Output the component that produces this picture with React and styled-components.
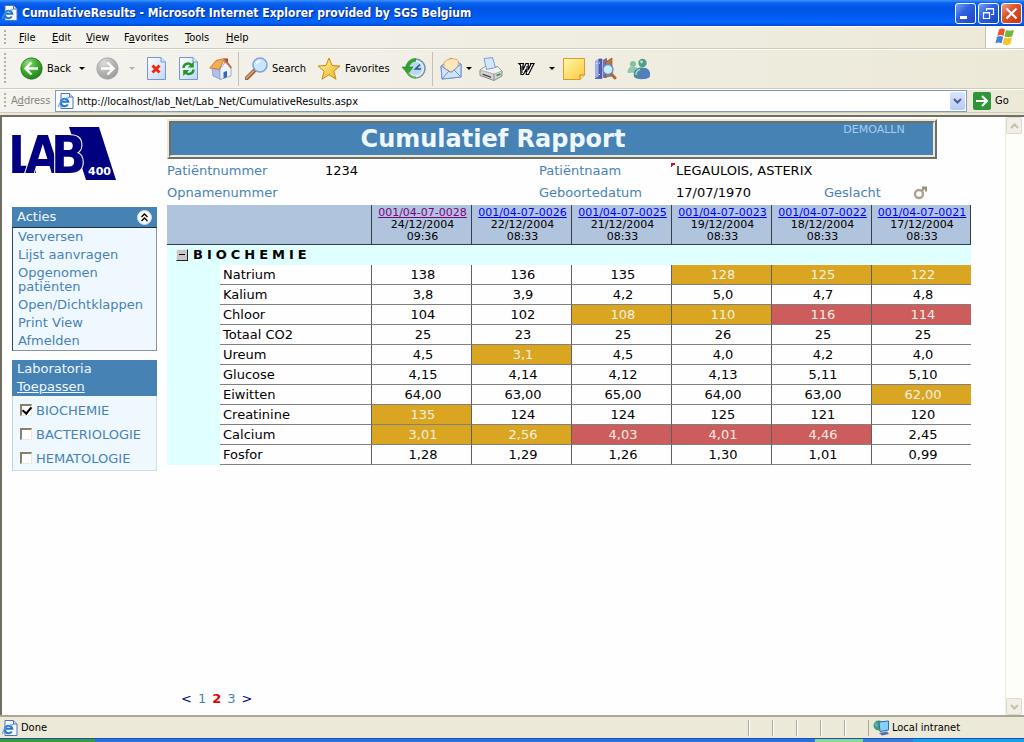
import React from 'react';
import styled, { createGlobalStyle } from 'styled-components';

const ui = '"DejaVu Sans Condensed", "DejaVu Sans", sans-serif';
const web = '"DejaVu Sans", sans-serif';
const steel = '#4682b4';
const face = '#ece9d8';

const GlobalStyle = createGlobalStyle`
  * { box-sizing: border-box; }
  body { margin: 0; font-family: ${web}; font-size: 13px; color: #000; background: ${face}; }
  button { font: inherit; color: inherit; background: none; border: 0; padding: 0; }
  svg { display: block; flex: none; }
  h1, ul { margin: 0; padding: 0; }
  ul { list-style: none; }
`;

const Window = styled.div`
  display: flex;
  flex-direction: column;
  min-height: 100vh;
`;

/* ---------- title bar ---------- */
const TitleBar = styled.header`
  display: flex;
  align-items: center;
  gap: 4px;
  height: 26px;
  padding: 0 2px;
  background: linear-gradient(#3d95ff 0, #0b62ef 3px, #0054e3 8px, #0058ee 14px, #0266ff 22px, #0048d0 26px);
`;
const WindowTitle = styled.span`
  flex: 1;
  font: bold 12px/24px ${ui};
  color: #fff;
  text-shadow: 1px 1px #0a2a80;
  white-space: nowrap;
`;
const CaptionButtons = styled.div`
  display: flex;
  gap: 2px;
`;
const CaptionButton = styled.button`
  display: flex;
  align-items: center;
  justify-content: center;
  width: 21px;
  height: 21px;
  border: 1px solid #fff;
  border-radius: 3px;
  background: ${(p) =>
    p.$close
      ? 'linear-gradient(135deg, #f0a086, #e0532d 40%, #c8350f)'
      : 'linear-gradient(135deg, #7ba2f5, #2f62e0 40%, #1b44c8)'};
`;

/* ---------- menu, tool and address bars ---------- */
const Bar = styled.div`
  display: flex;
  align-items: center;
  height: ${(p) => p.$height}px;
  font: 11px ${ui};
  background: linear-gradient(90deg, #f4f3ee, ${face});
  border-bottom: 1px solid #d0cdbb;
  box-shadow: inset 0 1px #fff;
`;
const Grip = styled.span`
  flex: none;
  width: 2px;
  margin-left: 4px;
  align-self: stretch;
  margin-block: 4px;
  background: repeating-linear-gradient(#b5b2a3 0 2px, transparent 2px 4px);
`;
const Menu = styled.nav`
  display: flex;
  flex: 1;
  padding-left: 6px;
`;
const MenuItem = styled.button`
  width: ${(p) => p.$width}px;
  padding: 0 7px;
  text-align: left;
  white-space: nowrap;
`;
const Flag = styled.div`
  display: flex;
  align-items: center;
  justify-content: center;
  align-self: stretch;
  width: 39px;
  background: #fff;
  border-left: 1px solid #c5c2b2;
`;
const Tools = styled.div`
  display: flex;
  align-items: center;
  align-self: stretch;
  padding-left: 8px;
`;
const Tool = styled.button`
  display: flex;
  align-items: center;
  justify-content: ${(p) => (p.$label ? 'flex-start' : 'center')};
  gap: 4px;
  width: ${(p) => p.$width}px;
  height: 100%;
  padding-left: ${(p) => (p.$label ? 6 : 0)}px;
  white-space: nowrap;
`;
const Divider = styled.span`
  width: 1px;
  height: 34px;
  background: #c5c2b2;
`;
const AddressLabel = styled.label`
  flex: none;
  width: 49px;
  padding-left: 5px;
  color: #888576;
`;
const AddressBox = styled.div`
  display: flex;
  flex: 1;
  align-items: center;
  min-width: 0;
  height: 22px;
  padding: 0 1px 0 2px;
  background: #fff;
  border: 1px solid #7f9db9;
`;
const AddressInput = styled.input`
  flex: 1;
  min-width: 0;
  padding: 2px 3px 0;
  border: 0;
  outline: 0;
  font: 11px ${ui};
  background: transparent;
`;
const DropButton = styled.button`
  display: flex;
  align-items: center;
  justify-content: center;
  width: 15px;
  height: 18px;
  border-radius: 2px;
  background: linear-gradient(#d9e4fd, #b7cbf8);
`;
const GoButton = styled.button`
  display: flex;
  align-items: center;
  flex: none;
  gap: 4px;
  width: 57px;
  padding-left: 6px;
`;

/* ---------- page ---------- */
const Viewport = styled.div`
  display: flex;
  flex: 1;
  margin-top: 2px;
  background: #fefefe;
  border: solid #716f64;
  border-width: 2px 0 0 2px;
`;
const Sidebar = styled.aside`
  flex: none;
  width: 145px;
  margin: 10px 10px 0 10px;
`;
const Panel = styled.section`
  margin-top: ${(p) => p.$top}px;
  padding-bottom: ${(p) => (p.$soft ? 2 : 0)}px;
  background: #f0f8ff;
  border: 1px solid ${(p) => (p.$soft ? '#d5dce0' : '#8a949c')};
  border-left-color: ${(p) => (p.$soft ? '#c5d0d8' : '#27496a')};
`;
const PanelHead = styled.div`
  display: flex;
  flex-wrap: wrap;
  align-items: center;
  justify-content: space-between;
  margin: -1px -1px 0;
  padding: ${(p) => (p.$tall ? '0 5px' : '1px 5px')};
  line-height: 18px;
  color: #f0f8ff;
  background: ${steel};
  border-bottom: ${(p) => (p.$tall ? 0 : '1px solid #1c2f45')};
`;
const HeadText = styled.span`
  flex: ${(p) => (p.$full ? '0 0 100%' : 'none')};
`;
const HeadLink = styled.a`
  color: #f0f8ff;
`;
const ActionList = styled.ul`
  padding: 0 4px 0 5px;
`;
const ActionItem = styled.li`
  padding: 2px 0;
  line-height: 14px;
`;
const ActionLink = styled.a`
  color: ${steel};
  text-decoration: none;
`;
const CheckRow = styled.label`
  display: flex;
  align-items: center;
  gap: 4px;
  height: 24px;
  padding: 5px 0 0 7px;
  color: ${steel};
`;
const CheckBox = styled.input`
  appearance: none;
  display: flex;
  align-items: center;
  justify-content: center;
  flex: none;
  width: 12px;
  height: 12px;
  margin: 0 0 2px;
  background: #fff;
  border: solid;
  border-width: 2px 1px 1px 2px;
  border-color: #85816c #ece9d8 #ece9d8 #85816c;
  &:checked::after {
    content: '';
    width: 4px;
    height: 7px;
    margin-bottom: 2px;
    border: solid #000;
    border-width: 0 2px 2px 0;
    transform: rotate(40deg);
  }
`;
const Main = styled.main`
  display: flex;
  flex: 1;
  flex-direction: column;
  min-width: 0;
  padding: 2px 34px 6px 0;
`;
const Banner = styled.div`
  margin-right: 34px;
  background: ${steel};
  border: 2px solid;
  border-color: ${face} #716f64 #716f64 ${face};
`;
const BannerInner = styled.div`
  display: grid;
  grid-template-columns: 1fr 118px;
  border: 2px solid;
  border-color: #716f64 ${face} ${face} #716f64;
`;
const ReportTitle = styled.h1`
  font-size: 24px;
  line-height: 32px;
  text-align: center;
  color: #f0f8ff;
`;
const UserName = styled.span`
  font-size: 11px;
  line-height: 14px;
  text-align: center;
  color: #a8cdee;
`;
const PatientInfo = styled.dl`
  display: grid;
  grid-template-columns: 158px 214px 137px 148px 89px 1fr;
  grid-auto-rows: 22px;
  align-items: center;
  margin: 0 0 2px;
`;
const Term = styled.dt`
  color: ${steel};
`;
const Value = styled.dd`
  position: relative;
  margin: 0;
  white-space: nowrap;
`;
const NoteMark = styled.i`
  position: absolute;
  top: 0;
  left: -5px;
  width: 5px;
  height: 5px;
  background: linear-gradient(135deg, #d01020 50%, transparent 50%);
`;
const Results = styled.table`
  width: 100%;
  table-layout: fixed;
  border-spacing: 0;
`;
const Col = styled.col`
  width: ${(p) => (p.$width ? `${p.$width}px` : 'auto')};
`;
const HeadCell = styled.th`
  height: 40px;
  padding: 1px 0 0 2px;
  font-weight: normal;
  font-size: 11px;
  line-height: 12px;
  background: #b0c4de;
  border-bottom: 1px solid #333f4a;
  border-left: ${(p) => (p.$blank ? 0 : '1px solid #333f4a')};
  &:last-child { border-right: 1px solid #333f4a; }
`;
const OrderLink = styled.a`
  display: block;
  color: ${(p) => (p.$visited ? '#800080' : '#0000ff')};
`;
const GroupCell = styled.th`
  height: 20px;
  padding: 0 9px;
  text-align: left;
  background: #e0ffff;
`;
const GroupLine = styled.div`
  display: flex;
  align-items: center;
  gap: 5px;
  line-height: 20px;
  letter-spacing: 4px;
`;
const Collapse = styled.button`
  width: 12px;
  height: 12px;
  display: flex;
  align-items: center;
  justify-content: center;
  background: #c8c8c8;
  border: solid;
  border-width: 1px;
  border-color: #eee #222 #222 #eee;
`;
const Indent = styled.td`
  padding: 0;
  background: #e0ffff;
`;
const NameCell = styled.th`
  height: 20px;
  padding: 0 3px;
  font-weight: normal;
  text-align: left;
  line-height: 19px;
  border-bottom: 1px solid #808080;
`;
const tones = { high: '#daa520', alarm: '#cd5c5c' };
const ResultCell = styled.td`
  height: 20px;
  padding: 0 0 0 3px;
  text-align: center;
  line-height: 19px;
  color: ${(p) => (p.$tone ? '#f4f0e4' : '#000')};
  background: ${(p) => tones[p.$tone] || 'transparent'};
  border-left: 1px solid #606060;
  border-bottom: 1px solid #808080;
`;
const Pager = styled.nav`
  display: flex;
  gap: 6px;
  margin-top: auto;
  padding-left: 14px;
  line-height: 20px;
`;
const PageLink = styled.a`
  color: ${(p) => (p.$arrow ? '#000080' : p.$current ? '#e00000' : steel)};
  font-weight: ${(p) => (p.$current ? 'bold' : 'normal')};
  text-decoration: none;
`;
const ScrollTrack = styled.div`
  display: flex;
  flex: none;
  flex-direction: column;
  justify-content: space-between;
  width: 17px;
  margin-right: 2px;
  background: #fdfdfa;
  border-left: 1px solid #efede3;
`;
const ScrollButton = styled.button`
  display: flex;
  align-items: center;
  justify-content: center;
  height: 17px;
  background: #f1efe6;
  border: 1px solid #dedbcb;
  border-radius: 2px;
`;

/* ---------- status bar ---------- */
const StatusBar = styled.footer`
  display: flex;
  align-items: center;
  height: 23px;
  padding-left: 2px;
  font: 11px ${ui};
  background: ${face};
  border-top: 2px solid #a9a695;
`;
const StatusText = styled.span`
  flex: 1;
  padding-left: 3px;
`;
const StatusSlot = styled.span`
  width: 24px;
  height: 16px;
  border-left: 1px solid #aca899;
  box-shadow: inset 1px 0 #fff;
`;
const ZoneSlot = styled.span`
  display: flex;
  align-items: center;
  gap: 2px;
  width: 156px;
  height: 16px;
  padding-left: 4px;
  border-left: 1px solid #aca899;
`;
const TaskStrip = styled.div`
  display: flex;
  height: 4px;
  background: #2e6fe0;
  border-top: 1px solid #1c4fb4;
`;
const Task = styled.span`
  flex: ${(p) => p.$span};
  background: ${(p) => p.$color};
`;

/* ---------- icons ---------- */
const Ie = ({ size = 16 }) => (
  <svg width={size} height={size} viewBox="0 0 16 16">
    <path d="M3 .5h8.500l3.500 3.500v11.500H3z" fill="#f4f8ff" stroke="#5673b0" />
    <path d="M11.500.5v3.500H15" fill="#cddcf5" stroke="#5673b0" />
    <path d="M9.800 11.500A3.800 3.800 0 1 1 10.300 8.700H3.500" fill="none" stroke="#2474d0" strokeWidth="2" />
    <path d="M1 14C-.5 11 6 4.500 11.500 4.500" fill="none" stroke="#49a4ea" strokeWidth="1.200" />
  </svg>
);
const Arrow = ({ color = '#000' }) => (
  <svg width="6" height="3" viewBox="0 0 6 3"><path d="M0 0h6L3 3z" fill={color} /></svg>
);
const Round = ({ grey }) => (
  <svg width="23" height="23" viewBox="0 0 23 23">
    <defs>
      <radialGradient id={grey ? 'rg' : 'rn'} cx=".35" cy=".25" r=".85">
        <stop offset="0" stopColor={grey ? '#dcdcdc' : '#8fdc7c'} />
        <stop offset=".5" stopColor={grey ? '#b5b5b5' : '#3caa2e'} />
        <stop offset="1" stopColor={grey ? '#999' : '#1c7d16'} />
      </radialGradient>
    </defs>
    <circle cx="11.500" cy="11.500" r="10.700" fill={`url(#${grey ? 'rg' : 'rn'})`} stroke={grey ? '#a6a6a6' : '#237a1c'} strokeWidth=".8" />
    <path d={grey ? 'M5 11.500h12M11.500 5.500l6 6-6 6' : 'M18 11.500H6M11.500 5.500l-6 6 6 6'} fill="none" stroke="#fff" strokeWidth="2.400" />
  </svg>
);
const Sheet = ({ children }) => (
  <svg width="19" height="23" viewBox="0 0 19 23">
    <defs><linearGradient id="sheet" x2="1" y2="1"><stop stopColor="#fff" /><stop offset="1" stopColor="#bfd5fa" /></linearGradient></defs>
    <path d="M.5.500h13.500l4.500 4.500v17.500H.5z" fill="url(#sheet)" stroke="#7897cf" />
    <path d="M14 .5V5h4.500" fill="#dde9fd" stroke="#7897cf" />
    {children}
  </svg>
);
const Stop = () => (
  <Sheet><path d="M5.500 8.500l7 7M12.500 8.500l-7 7" stroke="#ea2c10" strokeWidth="3" /></Sheet>
);
const Refresh = () => (
  <Sheet>
    <path d="M4.500 11c0-4 5-6 8-3" fill="none" stroke="#1e9a24" strokeWidth="2.400" />
    <path d="M14.800 4.500v6h-6z" fill="#1e9a24" />
    <path d="M14.500 12.500c0 4-5 6-8 3" fill="none" stroke="#1e9a24" strokeWidth="2.400" />
    <path d="M4.200 19v-6h6z" fill="#1e9a24" />
  </Sheet>
);
const Home = () => (
  <svg width="23" height="23" viewBox="0 0 23 23">
    <path d="M15.500 1.500h3.500v6h-3.500z" fill="#b23a22" />
    <path d="M3 11l1 8 8 3.500V13L7 6z" fill="#a9c3ec" stroke="#7694c6" strokeWidth=".7" />
    <path d="M11 22.500V12l5.500-7 5.500 6.500v7.500z" fill="#eef4fe" stroke="#7694c6" strokeWidth=".7" />
    <path d="M14.500 21.500v-6.500l3.500-1v6z" fill="#3c67b5" />
    <path d="M.8 11L7 3.500 15.500 1.500 10.500 12.500z" fill="#f5ad55" stroke="#c26b22" strokeWidth=".8" />
    <path d="M15.500 2l6.800 9" stroke="#c26b22" strokeWidth="1.600" />
  </svg>
);
const Search = () => (
  <svg width="23" height="23" viewBox="0 0 23 23">
    <path d="M1.500 21.500l8-8" stroke="#9a6540" strokeWidth="4" strokeLinecap="round" />
    <path d="M1.500 21l7-7" stroke="#dfa97a" strokeWidth="1.500" strokeLinecap="round" />
    <circle cx="15" cy="8" r="7" fill="#c8e6fb" stroke="#7fa3dc" strokeWidth="1.600" />
    <path d="M10.500 8a4.500 4.500 0 0 1 6-4.200c-2 .5-4.500 2.500-6 4.200z" fill="#fff" />
  </svg>
);
const Star = () => (
  <svg width="24" height="23" viewBox="0 0 24 23">
    <defs><linearGradient id="gold" x2="1" y2="1"><stop stopColor="#fff7a0" /><stop offset="1" stopColor="#f3b01c" /></linearGradient></defs>
    <path d="M12 1l3 7.500 8 .5-6.200 5.200 2.200 8-7-4.500-7 4.500 2.200-8L1 9l8-.5z" fill="url(#gold)" stroke="#c8891a" />
  </svg>
);
const History = () => (
  <svg width="24" height="23" viewBox="0 0 24 23">
    <circle cx="13.500" cy="11.500" r="9.500" fill="#e2edf4" stroke="#7e949f" strokeWidth="1.600" />
    <circle cx="13.500" cy="11.500" r="6.800" fill="#b8d8f2" />
    <path d="M18 7.500l-4.500 4.500h5.500" fill="none" stroke="#2c5488" strokeWidth="1.600" />
    <path d="M14 2.800A8.500 8.500 0 0 0 5.500 11" fill="none" stroke="#35a42e" strokeWidth="3.600" />
    <path d="M0 10h11l-5 7z" fill="#35a42e" stroke="#1e7d1b" strokeWidth=".6" />
    <path d="M6 15c1 3.500 4 5.500 8 5.500" fill="none" stroke="#58b84a" strokeWidth="2" />
  </svg>
);
const Mail = () => (
  <svg width="22" height="23" viewBox="0 0 22 23">
    <path d="M1 9l10-8 10 6v13L2 22z" fill="#b7d2f6" stroke="#7290cc" />
    <path d="M4 5.500C7 1 16 .5 18.500 4l-.5 7-7 4-7-4z" fill="#fde6bc" stroke="#e2a765" />
    <path d="M1 9l10 6.500L21 7v13L2 22z" fill="#cfe4fc" stroke="#7290cc" />
    <path d="M2 22l7-8M21 20l-7-7" stroke="#7290cc" />
  </svg>
);
const Printer = () => (
  <svg width="24" height="24" viewBox="0 0 24 24">
    <path d="M1 13l6-4 12 1 4 4v5l-8 4.500-14-5z" fill="#d4d4d4" stroke="#8b8b8b" />
    <path d="M1 13l14 4 8-3-4-4-12-1z" fill="#f1f1f1" stroke="#9a9a9a" strokeWidth=".7" />
    <path d="M5 1.500L13.500.5l3 10-9 2z" fill="#d3e6fd" stroke="#7d9dd0" />
    <path d="M15 17v6" stroke="#8b8b8b" /><path d="M3.500 16.500l8.500 3v1.500l-8.500-3z" fill="#4c4c4c" />
    <path d="M17.500 18.500l4-1.500" stroke="#37902d" strokeWidth="1.500" />
  </svg>
);
const Word = () => (
  <svg width="18" height="14" viewBox="0 0 18 14">
    <path d="M2 1.500h4.500l-.5 1.500v5l3-6.500h2.200v6.500L14 2l-1-.5h4l-5.500 11h-2.200V7l-3 5.500H4L3.500 3z" fill="#fff" stroke="#000" strokeWidth="1.200" />
    <path d="M5 4v7M10 4v6" stroke="#000" />
  </svg>
);
const Note = () => (
  <svg width="22" height="22" viewBox="0 0 22 22">
    <defs><linearGradient id="note" x2="1" y2="1"><stop stopColor="#fff7a8" /><stop offset="1" stopColor="#fbc93d" /></linearGradient></defs>
    <path d="M.5.500h21v16.500l-4.500 4.500H.5z" fill="url(#note)" stroke="#d79b28" />
    <path d="M17 21.500v-4.500h4.500" fill="#ffe58a" stroke="#bd861e" />
  </svg>
);
const Research = () => (
  <svg width="23" height="23" viewBox="0 0 23 23">
    <path d="M1 4l4-2.500v18L1 21z" fill="#9fb0e8" /><path d="M5 2h3v19.500H1l4-2z" fill="#5360b4" stroke="#3c4795" strokeWidth=".6" />
    <path d="M9.500 3l3-1.500v19h-3z" fill="#7c6fc0" stroke="#4b4394" strokeWidth=".6" />
    <path d="M11.500 5L18 1v18l-6.500 1z" fill="#b4793c" stroke="#80501f" strokeWidth=".6" />
    <path d="M16 15.500l5 5.500" stroke="#a96c34" strokeWidth="3" strokeLinecap="round" />
    <circle cx="14" cy="12.500" r="5" fill="#c9ebfb" stroke="#6788c6" strokeWidth="1.300" />
    <path d="M5.500 5.500v1M5.500 17v1M2.800 6v1" stroke="#fff" />
  </svg>
);
const People = () => (
  <svg width="24" height="22" viewBox="0 0 24 22">
    <circle cx="6" cy="6" r="3" fill="#7fc3a4" /><path d="M.5 15c0-5 2-6.500 5.500-6.500s5 2 5 6z" fill="#8ccbb0" />
    <circle cx="15.500" cy="5" r="4.200" fill="#4f9f88" /><circle cx="14.500" cy="3.800" r="1.600" fill="#a8d9c8" />
    <path d="M7 19c-1-7 2-9.500 8-9.500s9 3 7.500 9.500c-4 3-12 3-15.500 0z" fill="#4b8aa6" />
    <path d="M13 20.500c-1-5 2-8 8-8.500 2 2 2.500 4.500 1.500 7-2.500 2-6 2-9.500 1.500z" fill="#547cc4" />
    <path d="M9 17c0-3 1-5 4-5.500" stroke="#a8d9c8" strokeWidth="1.500" fill="none" />
  </svg>
);
const WinFlag = () => (
  <svg width="20" height="19" viewBox="0 0 20 19">
    <path d="M4 1.500c2-1.200 4-1.200 6 0L8.500 8c-2-1.200-4-1.200-6.200 0z" fill="#e8542c" />
    <path d="M11 2c2 1 5 1 8-.3l-1.700 6.500c-2.500 1.300-5 1.300-7.800.3z" fill="#6fb83c" />
    <path d="M2 9c2-1.200 4.200-1.200 6.200 0l-1.600 6.300c-2-1.200-4-1.200-6.200 0z" fill="#3d82d8" />
    <path d="M9.200 9.500c2.500 1 5.200 1 7.800-.3L15.400 16c-2.600 1.300-5.200 1.300-7.800 0z" fill="#f6c22c" />
  </svg>
);
const GoIcon = () => (
  <svg width="18" height="18" viewBox="0 0 18 18">
    <rect width="18" height="18" rx="2" fill="#2f9637" />
    <path d="M3 9h11M9 4l5 5-5 5" fill="none" stroke="#fff" strokeWidth="2" />
  </svg>
);
const Chevron = ({ up, color = '#4d6185' }) => (
  <svg width="9" height="6" viewBox="0 0 9 6">
    <path d={up ? 'M1 5l3.500-3.500L8 5' : 'M1 1l3.500 3.500L8 1'} fill="none" stroke={color} strokeWidth="2" />
  </svg>
);
const FoldIcon = () => (
  <svg width="15" height="15" viewBox="0 0 15 15">
    <circle cx="7.500" cy="7.500" r="7" fill="#fff" stroke="#c9dcec" />
    <path d="M4.500 7l3-3 3 3M4.500 11l3-3 3 3" fill="none" stroke="#000" strokeWidth="1.400" />
  </svg>
);
const Male = () => (
  <svg width="15" height="15" viewBox="0 0 15 15">
    <circle cx="6" cy="9" r="4" fill="none" stroke="#ada18c" strokeWidth="2.400" />
    <path d="M9 5.500L11.500 3M9 2.500h4v4" fill="none" stroke="#9c8f78" strokeWidth="2" />
  </svg>
);
const Zone = () => (
  <svg width="17" height="16" viewBox="0 0 17 16">
    <circle cx="5.500" cy="5.500" r="5" fill="#3ba35a" /><path d="M2 2.500c3 0 4 2 2 5-2-1-3.500-3-2-5z" fill="#57a6e8" />
    <path d="M6 2l9.500-1v9L7 11.500z" fill="#86d0f8" stroke="#3a66b4" />
    <path d="M6 13l8-1.500 2 2.500-7 1.500z" fill="#5570ac" />
  </svg>
);
const LogoSvg = styled.svg`
  overflow: visible;
  fill: #000080;
`;
const LogoName = styled.text`
  font: bold 51px ${ui};
  stroke: #fff;
  stroke-width: 2px;
  paint-order: stroke;
`;
const LogoNumber = styled.text`
  font: bold 11px ${web};
  fill: #fff;
`;
const Logo = () => (
  <LogoSvg width="104" height="53" viewBox="0 0 104 53" role="img" aria-label="LAB 400">
    <path d="M57 0h30l17 53H74z" />
    <LogoName y="46">
      <tspan x="-4">L</tspan>
      <tspan x="13">A</tspan>
      <tspan x="39">B</tspan>
    </LogoName>
    <LogoNumber x="76" y="48">400</LogoNumber>
  </LogoSvg>
);

/* ---------- data ---------- */
const menus = [['F', 'ile', 33], ['E', 'dit', 34], ['V', 'iew', 38], ['F', 'avorites', 61, 1], ['T', 'ools', 41], ['H', 'elp', 40]];
const actions = ['Verversen', 'Lijst aanvragen', 'Opgenomen patiënten', 'Open/Dichtklappen', 'Print View', 'Afmelden'];
const labs = [['BIOCHEMIE', true], ['BACTERIOLOGIE', false], ['HEMATOLOGIE', false]];
const orders = [
  ['001/04-07-0028', '24/12/2004', '09:36'],
  ['001/04-07-0026', '22/12/2004', '08:33'],
  ['001/04-07-0025', '21/12/2004', '08:33'],
  ['001/04-07-0023', '19/12/2004', '08:33'],
  ['001/04-07-0022', '18/12/2004', '08:33'],
  ['001/04-07-0021', '17/12/2004', '08:33'],
];
// One letter per result: "." normal, "h" outside the range, "a" alarm.
const results = [
  ['Natrium', '...hhh', ['138', '136', '135', '128', '125', '122']],
  ['Kalium', '......', ['3,8', '3,9', '4,2', '5,0', '4,7', '4,8']],
  ['Chloor', '..hhaa', ['104', '102', '108', '110', '116', '114']],
  ['Totaal CO2', '......', ['25', '23', '25', '26', '25', '25']],
  ['Ureum', '.h....', ['4,5', '3,1', '4,5', '4,0', '4,2', '4,0']],
  ['Glucose', '......', ['4,15', '4,14', '4,12', '4,13', '5,11', '5,10']],
  ['Eiwitten', '.....h', ['64,00', '63,00', '65,00', '64,00', '63,00', '62,00']],
  ['Creatinine', 'h.....', ['135', '124', '124', '125', '121', '120']],
  ['Calcium', 'hhaaa.', ['3,01', '2,56', '4,03', '4,01', '4,46', '2,45']],
  ['Fosfor', '......', ['1,28', '1,29', '1,26', '1,30', '1,01', '0,99']],
];
const toneOf = { h: 'high', a: 'alarm' };

export default function App() {
  return (
    <Window>
      <GlobalStyle />
      <TitleBar>
        <Ie />
        <WindowTitle>CumulativeResults - Microsoft Internet Explorer provided by SGS Belgium</WindowTitle>
        <CaptionButtons>
          <CaptionButton aria-label="Minimize">
            <svg width="13" height="13"><path d="M1 9h7v3H1z" fill="#fff" /></svg>
          </CaptionButton>
          <CaptionButton aria-label="Restore">
            <svg width="13" height="13"><path d="M4.500 4V1.500h7v6H9M1.500 5.500h6v6h-6zM4 2h8M1 6h7" fill="none" stroke="#fff" strokeWidth="1.200" /></svg>
          </CaptionButton>
          <CaptionButton $close aria-label="Close">
            <svg width="13" height="13"><path d="M1.500 1.500l10 10M11.500 1.500l-10 10" stroke="#fff" strokeWidth="2.200" /></svg>
          </CaptionButton>
        </CaptionButtons>
      </TitleBar>

      <Bar $height={23}>
        <Grip />
        <Menu>
          {menus.map(([first, rest, width, second]) => (
            <MenuItem key={first + rest} $width={width}>
              {second ? <>{first}<u>{rest[0]}</u>{rest.slice(1)}</> : <><u>{first}</u>{rest}</>}
            </MenuItem>
          ))}
        </Menu>
        <Flag><WinFlag /></Flag>
      </Bar>

      <Bar $height={40}>
        <Grip />
        <Tools>
          <Tool $width={62} $label><Round />Back</Tool>
          <Tool $width={12} aria-label="Back history"><Arrow /></Tool>
          <Tool $width={38} aria-label="Forward"><Round grey /></Tool>
          <Tool $width={12} aria-label="Forward history"><Arrow color="#b5b2a3" /></Tool>
          <Tool $width={36} aria-label="Stop"><Stop /></Tool>
          <Tool $width={28} aria-label="Refresh"><Refresh /></Tool>
          <Tool $width={36} aria-label="Home"><Home /></Tool>
          <Divider />
          <Tool $width={72} $label><Search />Search</Tool>
          <Tool $width={84} $label><Star />Favorites</Tool>
          <Tool $width={37} aria-label="History"><History /></Tool>
          <Divider />
          <Tool $width={46} aria-label="Mail"><Mail /><Arrow /></Tool>
          <Tool $width={24} aria-label="Print"><Printer /></Tool>
          <Tool $width={46} aria-label="Edit with Word"><Word /></Tool>
          <Tool $width={6} aria-label="Choose editor"><Arrow /></Tool>
          <Tool $width={38} aria-label="Discuss"><Note /></Tool>
          <Tool $width={24} aria-label="Research"><Research /></Tool>
          <Tool $width={44} aria-label="Messenger"><People /></Tool>
        </Tools>
      </Bar>

      <Bar $height={24}>
        <Grip />
        <AddressLabel htmlFor="address">A<u>d</u>dress</AddressLabel>
        <AddressBox>
          <Ie />
          <AddressInput id="address" defaultValue="http://localhost/lab_Net/Lab_Net/CumulativeResults.aspx" />
          <DropButton aria-label="Show addresses"><Chevron /></DropButton>
        </AddressBox>
        <GoButton><GoIcon />Go</GoButton>
      </Bar>

      <Viewport>
        <Sidebar>
          <Logo />
          <Panel $top={27}>
            <PanelHead>
              <HeadText>Acties</HeadText>
              <button aria-label="Fold"><FoldIcon /></button>
            </PanelHead>
            <ActionList>
              {actions.map((a) => <ActionItem key={a}><ActionLink href="#">{a}</ActionLink></ActionItem>)}
            </ActionList>
          </Panel>
          <Panel $top={9} $soft>
            <PanelHead $tall>
              <HeadText $full>Laboratoria</HeadText>
              <HeadLink href="#">Toepassen</HeadLink>
            </PanelHead>
            {labs.map(([name, on]) => (
              <CheckRow key={name}><CheckBox type="checkbox" defaultChecked={on} />{name}</CheckRow>
            ))}
          </Panel>
        </Sidebar>

        <Main>
          <Banner>
            <BannerInner>
              <ReportTitle>Cumulatief Rapport</ReportTitle>
              <UserName>DEMOALLN</UserName>
            </BannerInner>
          </Banner>
          <PatientInfo>
            <Term>Patiëntnummer</Term><Value>1234</Value>
            <Term>Patiëntnaam</Term><Value><NoteMark />LEGAULOIS, ASTERIX</Value>
            <Term /><Value />
            <Term>Opnamenummer</Term><Value />
            <Term>Geboortedatum</Term><Value>17/07/1970</Value>
            <Term>Geslacht</Term><Value><Male /></Value>
          </PatientInfo>
          <Results>
            <colgroup>
              <Col $width={53} /><Col $width={151} />
              {orders.map(([id]) => <Col key={id} />)}
            </colgroup>
            <thead>
              <tr>
                <HeadCell colSpan={2} $blank />
                {orders.map(([id, date, time], i) => (
                  <HeadCell key={id}>
                    <OrderLink href="#" $visited={i === 0}>{id}</OrderLink>
                    {date}<br />{time}
                  </HeadCell>
                ))}
              </tr>
            </thead>
            <tbody>
              <tr>
                <GroupCell colSpan={8}>
                  <GroupLine>
                    <Collapse aria-label="Collapse"><svg width="6" height="2"><path d="M0 0h6v1H0z" /></svg></Collapse>
                    BIOCHEMIE
                  </GroupLine>
                </GroupCell>
              </tr>
              {results.map(([name, marks, values]) => (
                <tr key={name}>
                  <Indent />
                  <NameCell scope="row">{name}</NameCell>
                  {values.map((v, i) => <ResultCell key={orders[i][0]} $tone={toneOf[marks[i]]}>{v}</ResultCell>)}
                </tr>
              ))}
            </tbody>
          </Results>
          <Pager>
            <PageLink href="#" $arrow>&lt;</PageLink>
            <PageLink href="#">1</PageLink>
            <PageLink href="#" $current>2</PageLink>
            <PageLink href="#">3</PageLink>
            <PageLink href="#" $arrow>&gt;</PageLink>
          </Pager>
        </Main>
        <ScrollTrack>
          <ScrollButton aria-label="Scroll up"><Chevron up color="#c3c0b0" /></ScrollButton>
          <ScrollButton aria-label="Scroll down"><Chevron color="#c3c0b0" /></ScrollButton>
        </ScrollTrack>
      </Viewport>

      <StatusBar>
        <Ie />
        <StatusText>Done</StatusText>
        <StatusSlot /><StatusSlot /><StatusSlot /><StatusSlot /><StatusSlot />
        <ZoneSlot><Zone />Local intranet</ZoneSlot>
      </StatusBar>
      <TaskStrip>
        <Task $span={95} $color="#3c9a3c" />
        <Task $span={720} $color="#2e6fe0" />
        <Task $span={48} $color="#8fd68f" />
        <Task $span={50} $color="#3c7ade" />
        <Task $span={111} $color="#16a0ee" />
      </TaskStrip>
    </Window>
  );
}
